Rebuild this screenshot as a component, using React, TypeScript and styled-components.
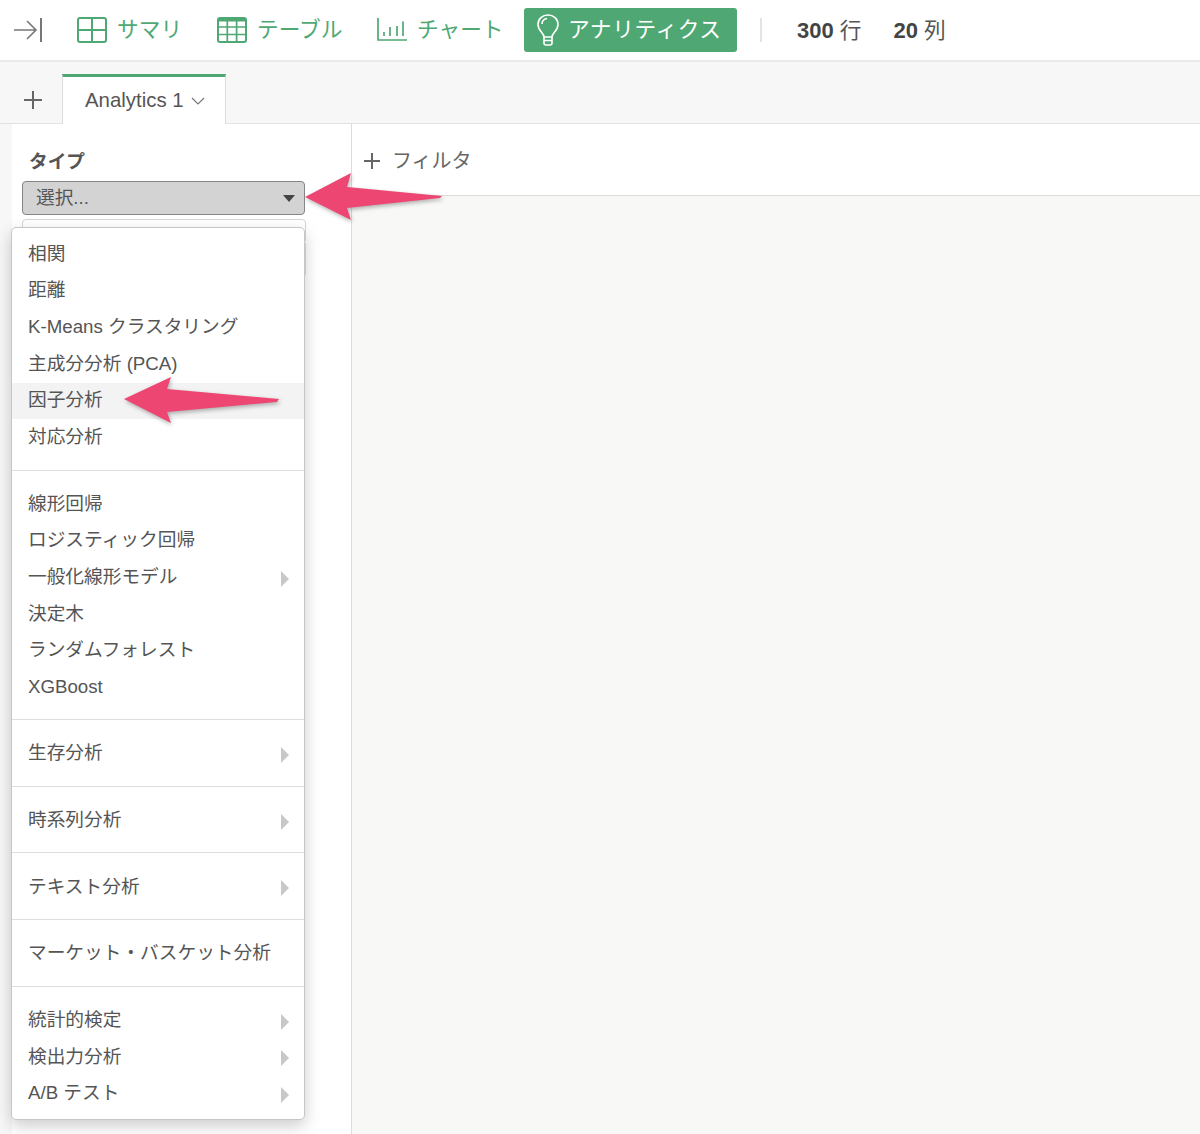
import React from "react";
import styled, { createGlobalStyle } from "styled-components";

const GREEN = "#4fa873";
const PINK = "#ee4672";
const FONT = `"Liberation Sans", "Noto Sans CJK JP", sans-serif`;

const GlobalStyle = createGlobalStyle`
  html, body {
    margin: 0;
    padding: 0;
    background: #fff;
  }
  body {
    font-family: ${FONT};
    color: #555;
  }
`;

const Page = styled.div`
  position: relative;
  width: 1200px;
  height: 1134px;
  overflow: hidden;
  display: flex;
  flex-direction: column;
`;

const Toolbar = styled.div`
  flex: none;
  height: 60px;
  border-bottom: 2px solid #e9e9e9;
  display: flex;
  align-items: center;
  padding-left: 14px;
`;

const ToggleIcon = styled.svg`
  width: 28px;
  height: 24px;
  margin-right: 35px;
`;

const NavItem = styled.div<{ $active?: boolean; $width: number }>`
  width: ${p => p.$width}px;
  height: 44px;
  display: flex;
  align-items: center;
  gap: ${p => (p.$active ? 9 : 10)}px;
  padding-left: ${p => (p.$active ? 13 : 0)}px;
  box-sizing: border-box;
  border-radius: 3px;
  font-size: 21.7px;
  line-height: 28px;
  letter-spacing: ${p => (p.$active ? 0.6 : 0)}px;
  background: ${p => (p.$active ? GREEN : "transparent")};
  color: ${p => (p.$active ? "#fff" : GREEN)};
  svg {
    flex: none;
  }
`;

const Separator = styled.div`
  width: 2px;
  height: 24px;
  background: #e4e4e4;
  margin: 0 35px 0 23px;
`;

const Stat = styled.div`
  font-size: 21.7px;
  line-height: 28px;
  padding-top: 2px;
  margin-right: 32px;
  color: #555;
  b {
    color: #444;
    font-size: 22px;
  }
`;

const TabStrip = styled.div`
  flex: none;
  height: 62px;
  background: #f7f7f7;
  box-sizing: border-box;
  border-bottom: 1px solid #e2e2e2;
  display: flex;
  align-items: flex-end;
  padding-left: 24px;
`;

const AddTab = styled.svg`
  width: 18px;
  height: 18px;
  margin: 0 20px 14px 0;
`;

const Tab = styled.div`
  width: 164px;
  height: 50px;
  margin-bottom: -1px;
  box-sizing: border-box;
  background: #fff;
  border-top: 3px solid ${GREEN};
  border-left: 1px solid #dcdcdc;
  border-right: 1px solid #dcdcdc;
  display: flex;
  align-items: center;
  gap: 7px;
  padding: 0 0 0 22px;
  font-size: 20.4px;
  color: #555;
`;

const Body = styled.div`
  flex: 1;
  display: flex;
  background: #f7f7f7;
  padding-left: 12px;
  min-height: 0;
`;

const Sidebar = styled.div`
  width: 340px;
  flex: none;
  box-sizing: border-box;
  background: #fff;
  border-right: 1px solid #dcdcdc;
  padding: 26px 0 0 10px;
`;

const FieldLabel = styled.div`
  font-size: 18.7px;
  line-height: 24px;
  font-weight: 700;
  color: #555;
  padding-left: 7px;
  margin-bottom: 7px;
`;

const Select = styled.div`
  width: 283px;
  height: 34px;
  box-sizing: border-box;
  border: 1px solid #858585;
  border-radius: 4px;
  background: #d3d3d3;
  display: flex;
  align-items: center;
  justify-content: space-between;
  padding: 0 9px 0 13px;
  font-size: 18.7px;
  line-height: 24px;
  color: #555;
  span:first-child {
    padding-bottom: 1px;
  }
`;

const Caret = styled.span`
  width: 0;
  height: 0;
  border-left: 6.5px solid transparent;
  border-right: 6.5px solid transparent;
  border-top: 7px solid #444;
`;

const SubSelect = styled.div`
  width: 284px;
  height: 24px;
  box-sizing: border-box;
  margin-top: 4px;
  border: 1px solid #d6d6d6;
  border-radius: 4px;
  background: #fff;
`;

const GreenEdge = styled.div`
  width: 284px;
  height: 32px;
  box-sizing: border-box;
  border-right: 1px solid #cfe6d8;
`;

const Main = styled.div`
  flex: 1;
  display: flex;
  flex-direction: column;
  min-width: 0;
  background: #fff;
`;

const FilterBar = styled.div`
  flex: none;
  height: 72px;
  box-sizing: border-box;
  background: #fff;
  border-bottom: 1px solid #dcdcdc;
  display: flex;
  align-items: center;
  gap: 12px;
  padding: 2px 0 0 12px;
  font-size: 20px;
  line-height: 28px;
  color: #666;
`;

const Canvas = styled.div`
  flex: 1;
  background: #f8f8f7;
  border-top-left-radius: 6px;
`;

const Menu = styled.div`
  position: absolute;
  left: 11px;
  top: 227px;
  width: 294px;
  height: 893px;
  box-sizing: border-box;
  background: #fff;
  border: 1px solid #c6c6c6;
  border-radius: 5px;
  box-shadow: 0 6px 16px rgba(0, 0, 0, 0.2);
`;

const MenuGroup = styled.div<{ $first?: boolean; $last?: boolean }>`
  padding-top: ${p => (p.$first ? 8.500 : p.$last ? 16.500 : 16)}px;
  padding-bottom: ${p => (p.$last ? 0 : p.$first ? 13.500 : 13)}px;
  border-bottom: ${p => (p.$last ? "none" : "1px solid #dedede")};
`;

const MenuItem = styled.div<{ $hover?: boolean }>`
  height: 36.6px;
  display: flex;
  align-items: center;
  justify-content: space-between;
  padding: 0 15px 0 16px;
  font-size: 18.7px;
  line-height: 24px;
  color: #555;
  white-space: nowrap;
  background: ${p => (p.$hover ? "#f3f3f3" : "transparent")};
  span:first-child {
    padding-bottom: 2px;
  }
`;

const SubArrow = styled.span`
  width: 0;
  height: 0;
  margin-top: 1px;
  border-top: 8px solid transparent;
  border-bottom: 8px solid transparent;
  border-left: 8.5px solid #c8c8c8;
`;

const Callout = styled.svg<{ $left: number; $top: number }>`
  position: absolute;
  left: ${p => p.$left}px;
  top: ${p => p.$top}px;
  overflow: visible;
  filter: drop-shadow(1px 2px 2px rgba(0, 0, 0, 0.3));
`;

const groups: { label: string; more?: boolean; hover?: boolean }[][] = [
  [
    { label: "相関" },
    { label: "距離" },
    { label: "K-Means クラスタリング" },
    { label: "主成分分析 (PCA)" },
    { label: "因子分析", hover: true },
    { label: "対応分析" },
  ],
  [
    { label: "線形回帰" },
    { label: "ロジスティック回帰" },
    { label: "一般化線形モデル", more: true },
    { label: "決定木" },
    { label: "ランダムフォレスト" },
    { label: "XGBoost" },
  ],
  [{ label: "生存分析", more: true }],
  [{ label: "時系列分析", more: true }],
  [{ label: "テキスト分析", more: true }],
  [{ label: "マーケット・バスケット分析" }],
  [
    { label: "統計的検定", more: true },
    { label: "検出力分析", more: true },
    { label: "A/B テスト", more: true },
  ],
];

function SummaryIcon() {
  return (
    <svg width="30" height="26" viewBox="0 0 30 26" fill="none" stroke={GREEN} strokeWidth="2">
      <rect x="1" y="1" width="28" height="24" rx="2" />
      <path d="M15 1v24M1 13h28" />
    </svg>
  );
}

function TableIcon() {
  return (
    <svg width="30" height="26" viewBox="0 0 30 26" fill="none" stroke={GREEN} strokeWidth="1.7">
      <rect x="1" y="1" width="28" height="24" rx="2" strokeWidth="2" />
      <path d="M1 3h28" strokeWidth="3" />
      <path d="M10.300 1v24M19.600 1v24M1 10h28M1 17.500h28" />
    </svg>
  );
}

function ChartIcon() {
  return (
    <svg width="30" height="24" viewBox="0 0 30 24" fill="none" stroke={GREEN} strokeWidth="1.7">
      <path d="M1 0v22h29" />
      <path d="M7 14v4M13 9v9M20 8v10M26 3.500v14.500" />
    </svg>
  );
}

function BulbIcon() {
  return (
    <svg width="22" height="32" viewBox="0 0 22 32" fill="none" stroke="#fff" strokeWidth="1.6">
      <path d="M7 23c0-4-6-6-6-12.500C1 5 5.500 1 11 1s10 4 10 9.500C21 17 15 19 15 23z" />
      <path d="M5 10c0-3 2.500-5 5-5.500" />
      <path d="M7 23v6c0 1 1 2 2 2h4c1 0 2-1 2-2v-6M7 26.500h8" />
    </svg>
  );
}

function Chevron() {
  return (
    <svg width="14" height="8" viewBox="0 0 14 8" fill="none" stroke="#777" strokeWidth="1.2">
      <path d="M1 1l6 6 6-6" />
    </svg>
  );
}

export default function App() {
  return (
    <Page>
      <GlobalStyle />
      <Toolbar>
        <ToggleIcon viewBox="0 0 28 24" fill="none" stroke="#777" strokeWidth="1.6">
          <path d="M0 12h22M13 3l9 9-9 9" />
          <path d="M27 0v24" strokeWidth="2" />
        </ToggleIcon>
        <NavItem $width={140}>
          <SummaryIcon />
          <span>サマリ</span>
        </NavItem>
        <NavItem $width={160}>
          <TableIcon />
          <span>テーブル</span>
        </NavItem>
        <NavItem $width={147}>
          <ChartIcon />
          <span>チャート</span>
        </NavItem>
        <NavItem $active $width={213}>
          <BulbIcon />
          <span>アナリティクス</span>
        </NavItem>
        <Separator />
        <Stat>
          <b>300</b> 行
        </Stat>
        <Stat>
          <b>20</b> 列
        </Stat>
      </Toolbar>
      <TabStrip>
        <AddTab viewBox="0 0 18 18" stroke="#666" strokeWidth="2">
          <path d="M9 0v18M0 9h18" />
        </AddTab>
        <Tab>
          <span>Analytics 1</span>
          <Chevron />
        </Tab>
      </TabStrip>
      <Body>
        <Sidebar>
          <FieldLabel>タイプ</FieldLabel>
          <Select>
            <span>選択...</span>
            <Caret />
          </Select>
          <SubSelect />
          <GreenEdge />
        </Sidebar>
        <Main>
          <FilterBar>
            <svg width="16" height="16" viewBox="0 0 16 16" stroke="#666" strokeWidth="2">
              <path d="M8 0v16M0 8h16" />
            </svg>
            <span>フィルタ</span>
          </FilterBar>
          <Canvas />
        </Main>
      </Body>
      <Menu>
        {groups.map((items, i) => (
          <MenuGroup key={i} $first={i === 0} $last={i === groups.length - 1}>
            {items.map(item => (
              <MenuItem key={item.label} $hover={item.hover}>
                <span>{item.label}</span>
                {item.more && <SubArrow />}
              </MenuItem>
            ))}
          </MenuGroup>
        ))}
      </Menu>
      <Callout $left={305} $top={173} width="138" height="47" viewBox="0 0 138 47">
        <polygon points="0,24 46,0 42,14 137,23 135,25 42,35 46,47" fill={PINK} />
      </Callout>
      <Callout $left={124} $top={377} width="156" height="46" viewBox="0 0 156 46">
        <polygon points="0,22 47,0 43,12 155,22 153,25 43,35 47,46" fill={PINK} />
      </Callout>
    </Page>
  );
}
